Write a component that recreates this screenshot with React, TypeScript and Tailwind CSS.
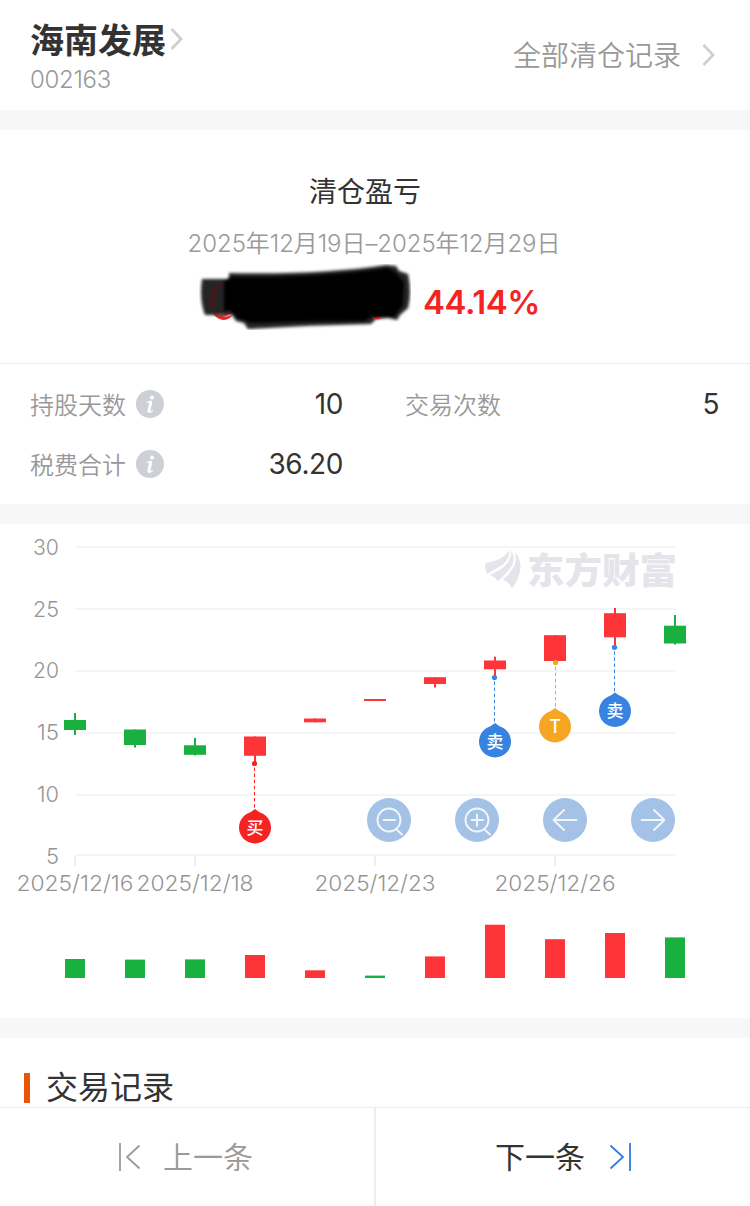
import React from "react";

const RED = "#fe3538";
const GREEN = "#1ab03f";

type Candle = { x: number; top: number; bottom: number; high: number; low: number; vol: number; up: boolean; volUp?: boolean };

const candles: Candle[] = [
  { x: 75, top: 720, bottom: 730, high: 713, low: 735, vol: 959, up: false },
  { x: 135, top: 729.5, bottom: 745, high: 729.5, low: 747.5, vol: 959.6, up: false },
  { x: 195, top: 745.3, bottom: 754.8, high: 738, low: 755.5, vol: 959.4, up: false },
  { x: 255, top: 736.5, bottom: 755.8, high: 736.5, low: 763, vol: 955, up: true },
  { x: 315, top: 718.5, bottom: 722.3, high: 718.5, low: 722.3, vol: 970.3, up: true },
  { x: 375, top: 699, bottom: 701, high: 699, low: 701, vol: 975.6, up: true, volUp: false },
  { x: 435, top: 677.2, bottom: 684, high: 677.2, low: 687.5, vol: 956.4, up: true },
  { x: 495, top: 660.5, bottom: 669.3, high: 656.7, low: 677, vol: 924.7, up: true },
  { x: 555, top: 635.2, bottom: 661, high: 635.2, low: 661, vol: 939.2, up: true },
  { x: 615, top: 613.2, bottom: 637.3, high: 608, low: 645, vol: 933, up: true },
  { x: 675, top: 625.7, bottom: 643.5, high: 615, low: 644.5, vol: 937.4, up: false },
];

const markers = [
  { x: 254.5, pin: 255, dot: 763.5, tip: 809, label: "买", color: "#f62323" },
  { x: 494.5, pin: 495, dot: 677.5, tip: 723, label: "卖", color: "#3783e2" },
  { x: 555.5, pin: 555, dot: 662.5, tip: 708, label: "T", color: "#f6a623" },
  { x: 614.5, pin: 615, dot: 647.3, tip: 692.5, label: "卖", color: "#3783e2" },
];

const yTicks = [
  { v: "30", y: 547, base: 554.5, w: 26 },
  { v: "25", y: 609, base: 616.5, w: 26 },
  { v: "20", y: 671, base: 678.3, w: 26 },
  { v: "15", y: 733, base: 740.2, w: 22 },
  { v: "10", y: 795, base: 801.8, w: 22 },
  { v: "5", y: 855, base: 863.5, w: 13 },
];

const xTicks = [
  { v: "2025/12/16", x: 75, w: 117 },
  { v: "2025/12/18", x: 195, w: 117 },
  { v: "2025/12/23", x: 375, w: 121 },
  { v: "2025/12/26", x: 555, w: 121 },
];

function Chevron() {
  return (
    <svg width="14" height="24" viewBox="0 0 14 24" fill="none" stroke="#cfcfcf" strokeWidth="2.8">
      <path d="M1.5 2L11 12L1.5 22" />
    </svg>
  );
}

function Info() {
  return (
    <svg width="28" height="28" viewBox="0 0 28 28">
      <circle cx="14" cy="14" r="14" fill="#cdd0d6" />
      <circle cx="16" cy="7.6" r="2" fill="#fff" />
      <path d="M11.2 12.4Q13.2 12.2 14.8 11.4M12.7 21.6Q13.6 22.8 16.3 21" fill="none" stroke="#fff" strokeWidth="1.4" strokeLinecap="round" />
      <path d="M14.8 12.2L12.8 21.2" stroke="#fff" strokeWidth="2.9" strokeLinecap="round" />
    </svg>
  );
}

function Row({ label, value, info }: { label: string; value: string; info?: boolean }) {
  return (
    <div className="flex h-[60px] items-center justify-between">
      <div className="flex items-center gap-[10px]">
        <span className="pt-[3px] text-2xl font-[350] text-[#999]">{label}</span>
        {info && <Info />}
      </div>
      <span className="text-[28px] font-[380] tracking-[-0.4px] text-[#333]">{value}</span>
    </div>
  );
}

function Scribble() {
  return (
    <svg className="block" width="212" height="66" viewBox="199 264 212 66">
      <defs>
        <filter id="soft" x="-5%" y="-15%" width="110%" height="130%">
          <feGaussianBlur stdDeviation="1.4" />
        </filter>
      </defs>
      <g filter="url(#soft)">
        <path d="M202 279H229V273Q320 275 386 265L396 266L399 271L408 274Q412 292 408 308L400 315L397 320L388 318L376 319L371 324Q310 325 248 329L244 323L236 321L232 315H205Q199 300 202 279Z" fill="#000" opacity=".86" />
        <path d="M230 277Q320 278 388 268L396 273L404 282L403 305L394 317H371L365 321Q310 321 252 323L237 318L231 311H224V281Z" fill="#000" />
      </g>
      <path d="M213 314Q222 319 233 315Q229 320 223 320Q217 319 213 314Z" fill="#f62323" />
      <path d="M212 308Q210 290 222 284M214 313Q223 319 230 311" fill="none" stroke="#6c0909" strokeWidth="3" opacity=".6" />
      <path d="M373 318Q378 320 382 317.5Q378 319 373 318Z" fill="#d91b1b" stroke="#d91b1b" />
    </svg>
  );
}

function Chart() {
  return (
    <svg className="block" width="750" height="494" viewBox="0 524 750 494" fontFamily="Inter, 'Noto Sans CJK SC', sans-serif">
      {yTicks.map((t) => (
        <g key={t.v}>
          <rect x="75" y={t.y - 1} width="600" height="2" fill="#f5f5f5" />
          <text x={59 - t.w} y={t.base} fontSize="22" fontWeight="340" fill="#959595" textLength={t.w} lengthAdjust="spacingAndGlyphs">{t.v}</text>
        </g>
      ))}
      {xTicks.map((t) => (
        <g key={t.v}>
          <rect x={t.x - 1} y="856" width="2" height="9.5" fill="#ededed" />
          <text x={t.x - t.w / 2} y="891" fontSize="22" fontWeight="340" fill="#959595" textLength={t.w} lengthAdjust="spacingAndGlyphs">{t.v}</text>
        </g>
      ))}
      <g fill="#e5e4ea">
        <path d="M485 565Q485 562.5 490 562Q499 560 504 556Q508 553 509.5 550Q510 558 503 564.5Q496 569 487 574Q485 569 485 565Z" />
        <path d="M489.5 575Q499 571 505 566Q511 560 511.5 551Q515 557 512.8 564Q508 573 497.5 581.5Q496 577 489.5 575Z" />
        <path d="M503 579.5Q512 572 515 564Q517 557 514.5 552Q521 558 520.5 568Q519 580 512 588.5Q509 582 503 579.5Z" />
        <text x="527" y="583.5" fontSize="36" fontWeight="900" fontFamily="'Noto Sans CJK SC', sans-serif" textLength="150" lengthAdjust="spacingAndGlyphs">东方财富</text>
      </g>
      {candles.map((c) => (
        <g key={c.x}>
          <rect x={c.x - 1} y={c.high} width="2" height={c.low - c.high} fill={c.up ? RED : GREEN} />
          <rect x={c.x - 11} y={c.top} width="22" height={c.bottom - c.top} fill={c.up ? RED : GREEN} />
          <rect x={c.x - 10} y={c.vol} width="20" height={978 - c.vol} fill={c.volUp ?? c.up ? RED : GREEN} />
        </g>
      ))}
      {markers.map((m) => (
        <g key={m.x} fill={m.color}>
          <circle cx={m.x} cy={m.dot} r="2.6" />
          <line x1={m.x} y1={m.dot + 4} x2={m.x} y2={m.tip} stroke={m.color} strokeWidth="1" strokeDasharray="3.5 2.6" />
          <g transform={`translate(${m.pin} ${m.tip})`}>
            <path d="M0 0Q3 2.8 8.5 5A16 16 0 1 1 -8.5 5Q-3 2.8 0 0Z" />
            <text x="0" y={m.label === "T" ? 25 : 24.5} fill="#fff" fontSize={m.label === "T" ? 18 : 17} fontWeight="500" textAnchor="middle" fontFamily={m.label === "T" ? "Inter" : "'Noto Sans CJK SC', sans-serif"}>{m.label}</text>
          </g>
        </g>
      ))}
    </svg>
  );
}

const controls = [
  { name: "缩小", d: "M16.5 22H28M33.5 22A11.5 11.5 0 1 1 10.5 22A11.5 11.5 0 1 1 33.5 22M29 31L35 36.5" },
  { name: "放大", d: "M16.5 22H28M22 16.5V28M33.5 22A11.5 11.5 0 1 1 10.5 22A11.5 11.5 0 1 1 33.5 22M29 31L35 36.5" },
  { name: "左移", d: "M33.5 22H10.5M21 12L10.5 22L21 32" },
  { name: "右移", d: "M10.5 22H33.5M23 12L33.5 22L23 32" },
];

export default function App() {
  return (
    <div className="flex h-[1206px] w-[750px] flex-col overflow-hidden bg-white font-[Inter,'Noto_Sans_CJK_SC',sans-serif] text-[#333]">
      <header className="flex h-[110px] shrink-0 justify-between pl-[30px] pr-[34px]">
        <div className="flex flex-col pt-[15px]">
          <div className="flex h-[48px] items-center gap-[4px]">
            <h1 className="whitespace-nowrap pt-[3px] text-[34px] font-bold leading-[48px]">海南发展</h1>
            <Chevron />
          </div>
          <span className="text-2xl font-[340] leading-[33px] tracking-[-0.3px] text-[#999]">002163</span>
        </div>
        <div className="flex h-[110px] items-center gap-[21px]">
          <span className="pt-[2px] text-[28px] font-[350] text-[#999]">全部清仓记录</span>
          <Chevron />
        </div>
      </header>
      <div className="h-5 shrink-0 bg-[#f7f7f7]" />

      <section className="flex h-[234px] shrink-0 flex-col items-center border-b border-[#ebebeb]">
        <h2 className="mt-[42px] pr-[20px] text-[28px] font-normal leading-[40px]">清仓盈亏</h2>
        <p className="mt-[16px] whitespace-nowrap pr-[2px] text-2xl font-[340] leading-[32px] tracking-[-0.07px] text-[#999]">2025年12月19日–2025年12月29日</p>
        <div className="mt-[4px] flex h-[66px] items-center gap-[12px] self-start pl-[199px]">
          <Scribble />
          <span className="pt-[12px] text-[33px] font-semibold tracking-[-0.4px] text-[#f62323]">44.14%</span>
        </div>
      </section>

      <section className="grid h-[140px] shrink-0 grid-cols-2 pt-[10px]">
        <div className="pl-[30px] pr-[32px]">
          <Row label="持股天数" value="10" info />
          <Row label="税费合计" value="36.20" info />
        </div>
        <div className="pl-[30px] pr-[31px]">
          <Row label="交易次数" value="5" />
        </div>
      </section>
      <div className="h-5 shrink-0 bg-[#f7f7f7]" />

      <section className="relative h-[494px] shrink-0">
        <Chart />
        <div className="absolute left-[367px] top-[274px] flex gap-[44px]">
          {controls.map((c) => (
            <button key={c.name} aria-label={c.name} className="size-11 rounded-full bg-[#a4c2e5]">
              <svg width="44" height="44" viewBox="0 0 44 44" fill="none" stroke="#f1f6fc" strokeWidth="1.9" strokeLinecap="round" strokeLinejoin="round">
                <path d={c.d} />
              </svg>
            </button>
          ))}
        </div>
      </section>
      <div className="h-5 shrink-0 bg-[#f7f7f7]" />

      <section className="flex h-[69px] shrink-0 items-end gap-4 pl-6">
        <div className="mb-[4px] h-[30px] w-[6px] bg-[#e95504]" />
        <h2 className="-mb-[2px] text-[32px] font-normal leading-[42px]">交易记录</h2>
      </section>

      <footer className="grid h-[99px] shrink-0 grid-cols-2 border-t border-[#ebebeb]">
        <button className="flex items-center border-r border-[#ededed] pl-[118px] text-[30px] font-[350] text-[#999]">
          <svg width="24" height="30" viewBox="0 0 24 30" fill="none" stroke="currentColor" strokeWidth="1.8">
            <path d="M2 1V29M21.5 3.5L9 15L21.5 26.5" />
          </svg>
          <span className="ml-[21px]">上一条</span>
        </button>
        <button className="flex items-center border-l border-[#ededed] pl-[119px] text-[30px]">
          <span>下一条</span>
          <svg className="ml-[23px]" width="24" height="30" viewBox="0 0 24 30" fill="none" stroke="#2f7de0" strokeWidth="1.8">
            <path d="M22 1V29M2.5 3.5L15 15L2.5 26.5" />
          </svg>
        </button>
      </footer>
    </div>
  );
}
